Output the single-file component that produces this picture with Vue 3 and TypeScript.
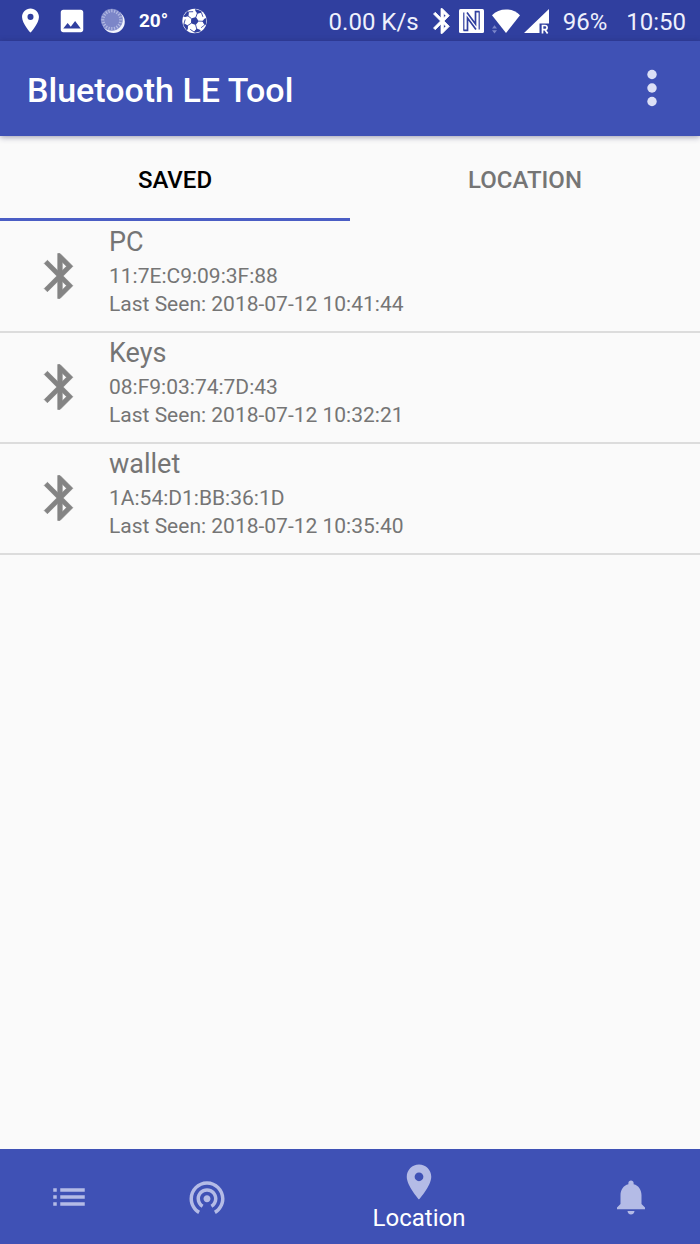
<script setup lang="ts">
import { ref } from 'vue'

interface Device {
  name: string
  address: string
  lastSeen: string
}

interface NavItem {
  id: string
  label: string
  path: string
}

const tabs: string[] = ['Saved', 'Location']
const activeTab = ref<string>('Saved')

const devices: Device[] = [
  { name: 'PC', address: '11:7E:C9:09:3F:88', lastSeen: '2018-07-12 10:41:44' },
  { name: 'Keys', address: '08:F9:03:74:7D:43', lastSeen: '2018-07-12 10:32:21' },
  { name: 'wallet', address: '1A:54:D1:BB:36:1D', lastSeen: '2018-07-12 10:35:40' },
]

const pinPath =
  'M12 2C8.13 2 5 5.13 5 9c0 5.25 7 13 7 13s7-7.75 7-13c0-3.87-3.13-7-7-7zm0 9.500a2.500 2.500 0 1 1 0-5 2.500 2.500 0 0 1 0 5z'
const bluetoothPath =
  'M17.710 7.710L12 2h-1v7.590L6.410 5 5 6.410 10.590 12 5 17.590 6.410 19 11 14.410V22h1l5.710-5.710-4.300-4.290 4.300-4.290zM13 5.830l1.880 1.880L13 9.590V5.830zm1.880 10.460L13 18.170v-3.760l1.880 1.880z'

const navItems: NavItem[] = [
  {
    id: 'list',
    label: 'Devices',
    path: 'M3 13h2v-2H3v2zm0 4h2v-2H3v2zm0-8h2V7H3v2zm4 4h14v-2H7v2zm0 4h14v-2H7v2zM7 7v2h14V7H7z',
  },
  {
    id: 'beacon',
    label: 'Beacon',
    path: 'M12 11c-1.100 0-2 .9-2 2s.9 2 2 2 2-.9 2-2-.9-2-2-2zm6 2c0-3.310-2.690-6-6-6s-6 2.690-6 6c0 2.220 1.210 4.150 3 5.190l1-1.740c-1.190-.7-2-1.970-2-3.450 0-2.210 1.790-4 4-4s4 1.790 4 4c0 1.480-.81 2.750-2 3.450l1 1.740c1.790-1.040 3-2.970 3-5.190zM12 3C6.480 3 2 7.480 2 13c0 3.700 2.010 6.920 4.990 8.650l1-1.730C5.610 18.530 4 15.960 4 13c0-4.420 3.580-8 8-8s8 3.580 8 8c0 2.960-1.610 5.530-4 6.920l1 1.730c2.990-1.730 5-4.950 5-8.650 0-5.520-4.480-10-10-10z',
  },
  { id: 'location', label: 'Location', path: pinPath },
  {
    id: 'alerts',
    label: 'Alerts',
    path: 'M12 22c1.100 0 2-.9 2-2h-4c0 1.100.89 2 2 2zm6-6v-5c0-3.070-1.640-5.640-4.500-6.320V4c0-.83-.67-1.500-1.500-1.500s-1.500.67-1.500 1.500v.68C7.630 5.360 6 7.920 6 11v5l-2 2v1h16v-1l-2-2z',
  },
]
const activeNav = ref<string>('location')

const rays: number[] = Array.from({ length: 20 }, (_, i) => i * 18)
const panels: number[] = Array.from({ length: 5 }, (_, i) => i * 72)
</script>

<template>
  <div class="screen">
    <div class="status">
      <div class="status-left">
        <span class="cell">
          <svg width="29" height="29" viewBox="0 0 24 24"><path fill="#fff" :d="pinPath" /></svg>
        </span>
        <span class="cell">
          <svg width="30" height="30" viewBox="0 0 24 24">
            <path fill="#fff" d="M21 19V5c0-1.100-.9-2-2-2H5c-1.100 0-2 .9-2 2v14c0 1.100.9 2 2 2h14c1.100 0 2-.9 2-2zM8.500 13.500l2.500 3.010L14.500 12l4.500 6H5l3.500-4.500z" />
          </svg>
        </span>
        <span class="cell">
          <svg width="26" height="26" viewBox="0 0 26 26">
            <circle cx="13.500" cy="13.700" r="11.300" fill="#f1f3fd" />
            <circle cx="11.800" cy="11.800" r="11" fill="#7f89c9" />
            <g stroke="#b3bae3" stroke-width="1.200">
              <line v-for="r in rays" :key="r" x1="11.800" y1="1.300" x2="11.800" y2="4.500" :transform="`rotate(${r} 11.800 11.800)`" />
            </g>
            <circle cx="11.800" cy="11.800" r="7.300" fill="#7c86c8" />
          </svg>
        </span>
        <span class="cell temp">20°</span>
        <span class="cell">
          <svg width="26" height="26" viewBox="0 0 26 26">
            <circle cx="12.500" cy="13" r="12.200" fill="#fff" />
            <g transform="rotate(20 12.500 13)" fill="#303f9f" stroke="#303f9f">
              <path stroke="none" d="M12.500 8.800l4 2.900-1.500 4.700h-5L8.500 11.700z" />
              <g v-for="p in panels" :key="p" :transform="`rotate(${p} 12.500 13)`">
                <path stroke-width="0.800" d="M12.500 9V4.500M12.500 4.500L16 2.600M19 6.200L16 2.600" fill="none" />
                <path stroke="none" d="M9 1.400h7l-.8 1.800-2.700 1.900-2.700-1.900z" />
              </g>
            </g>
          </svg>
        </span>
      </div>
      <div class="status-right">
        <span>0.00 K/s</span>
        <div class="signals">
          <svg width="24" height="30" viewBox="3 0 19.200 24">
            <path fill="#fff" stroke="#fff" stroke-width="0.600" :d="bluetoothPath" />
          </svg>
          <svg width="25" height="26" viewBox="0 0 25 26">
            <rect y="1" width="25" height="24" rx="1.500" fill="#fff" />
            <path d="M4.500 22.300h4V10l8.500 11.500M20.500 3.700h-4V16L8 4.500" fill="none" stroke="#303f9f" stroke-width="1.700" />
            <path d="M4.800 4.500v18M20.200 3.500v18" stroke="#303f9f" stroke-width="1.200" />
          </svg>
          <svg width="32" height="26" viewBox="0 0 32 26">
            <path fill="#fff" d="M18 25L4 7.200C7.500 3.500 12.500 1.500 18 1.500s10.500 2 14 5.700z" />
            <path fill="#7b86ca" d="M4 20.500l2.500-3.200 2.500 3.200zM4 22.200h5l-2.500 3.200z" />
          </svg>
          <svg width="25" height="26" viewBox="0 0 25 26">
            <path fill="#fff" d="M25 1v14.500h-9.500V25H0z" />
            <path d="M18.500 25.500v-8h2.500a2.100 2.100 0 0 1 0 4.200h-2.500m2.600 0l2.500 3.800" fill="none" stroke="#fff" stroke-width="1.700" />
          </svg>
        </div>
        <span>96%</span>
        <span class="clock">10:50</span>
      </div>
    </div>

    <header class="appbar">
      <h1>Bluetooth LE Tool</h1>
      <button class="more" type="button" aria-label="More options">
        <svg width="54" height="54" viewBox="0 0 24 24" fill="#dce0f6">
          <circle cx="12" cy="6" r="2.100" />
          <circle cx="12" cy="12" r="2.100" />
          <circle cx="12" cy="18" r="2.100" />
        </svg>
      </button>
    </header>

    <div class="tabs" role="tablist">
      <button
        v-for="tab in tabs"
        :key="tab"
        type="button"
        role="tab"
        class="tab"
        :class="{ active: tab === activeTab }"
        :aria-selected="tab === activeTab"
        @click="activeTab = tab"
      >
        {{ tab }}
      </button>
    </div>

    <main>
      <ul class="devices">
        <li v-for="device in devices" :key="device.address" class="device">
          <svg width="54" height="54" viewBox="0 0 24 24">
            <path fill="#848484" stroke="#848484" stroke-width="0.300" :d="bluetoothPath" />
          </svg>
          <div>
            <h2>{{ device.name }}</h2>
            <p>{{ device.address }}</p>
            <p>Last Seen: {{ device.lastSeen }}</p>
          </div>
        </li>
      </ul>
    </main>

    <nav class="bottom">
      <button
        v-for="item in navItems"
        :key="item.id"
        type="button"
        class="nav-item"
        :class="{ active: item.id === activeNav }"
        :aria-label="item.label"
        @click="activeNav = item.id"
      >
        <svg width="42" height="42" viewBox="0 0 24 24"><path fill="#b4bbe6" :d="item.path" /></svg>
        <span v-if="item.id === activeNav">{{ item.label }}</span>
      </button>
    </nav>
  </div>
</template>

<style>
body {
  margin: 0;
  background: #fafafa;
}
</style>

<style scoped>
.screen {
  display: flex;
  flex-direction: column;
  min-height: 100vh;
  background: #fafafa;
  font-family: Roboto, 'Liberation Sans', sans-serif;
  color: #757575;
}

svg {
  display: block;
  flex: none;
}

button {
  margin: 0;
  padding: 0;
  border: 0;
  background: none;
  font: inherit;
  color: inherit;
  cursor: pointer;
}

.status {
  display: flex;
  justify-content: space-between;
  align-items: center;
  height: 41px;
  padding: 0 14px 0 10px;
  background: #303f9f;
  color: #eef0fc;
  font-size: 24px;
  line-height: 28px;
  white-space: nowrap;
}

.status-left,
.status-right,
.signals {
  display: flex;
  align-items: center;
}

.cell {
  display: flex;
  justify-content: center;
  width: 41px;
}

.temp {
  font-size: 19px;
  font-weight: 700;
  color: #fff;
}

.status-right {
  gap: 12px;
}

.status-right span {
  padding-top: 2px;
}

.signals {
  gap: 4px;
  padding-right: 2px;
}

.clock {
  padding-left: 7px;
}

.appbar {
  position: relative;
  display: flex;
  justify-content: space-between;
  align-items: center;
  height: 95px;
  padding: 0 21px 0 27px;
  background: #3f51b5;
  box-shadow: 0 1px 6px rgba(30, 30, 80, 0.45);
}

h1 {
  margin: 0;
  padding-top: 2px;
  font-size: 34px;
  font-weight: 500;
  line-height: 40px;
  color: #fff;
}

.more {
  padding-bottom: 2px;
}

.tabs {
  display: flex;
  height: 85px;
}

.tab {
  flex: 1;
  padding-top: 5px;
  border-bottom: 3px solid transparent;
  font-size: 24px;
  font-weight: 500;
  text-transform: uppercase;
  color: #757575;
}

.tab.active {
  border-bottom-color: #4a5dc4;
  color: #000;
}

main {
  flex: 1;
  padding-top: 1px;
}

.devices {
  margin: 0;
  padding: 0;
  list-style: none;
}

.device {
  display: flex;
  align-items: center;
  gap: 22px;
  padding: 0 33px 13px;
  border-bottom: 2px solid #dcdcdc;
}

.device svg {
  margin-top: 12px;
}

h2 {
  margin: 0;
  font-size: 27px;
  font-weight: 400;
  line-height: 40px;
}

p {
  margin: 0;
  font-size: 21px;
  line-height: 28px;
}

.bottom {
  display: grid;
  grid-template-columns: 138fr 138fr 286fr 138fr;
  height: 95px;
  background: #3f51b5;
}

.nav-item {
  display: flex;
  flex-direction: column;
  align-items: center;
  justify-content: center;
  gap: 1px;
  font-size: 24px;
  line-height: 28px;
  color: #fff;
}
</style>
